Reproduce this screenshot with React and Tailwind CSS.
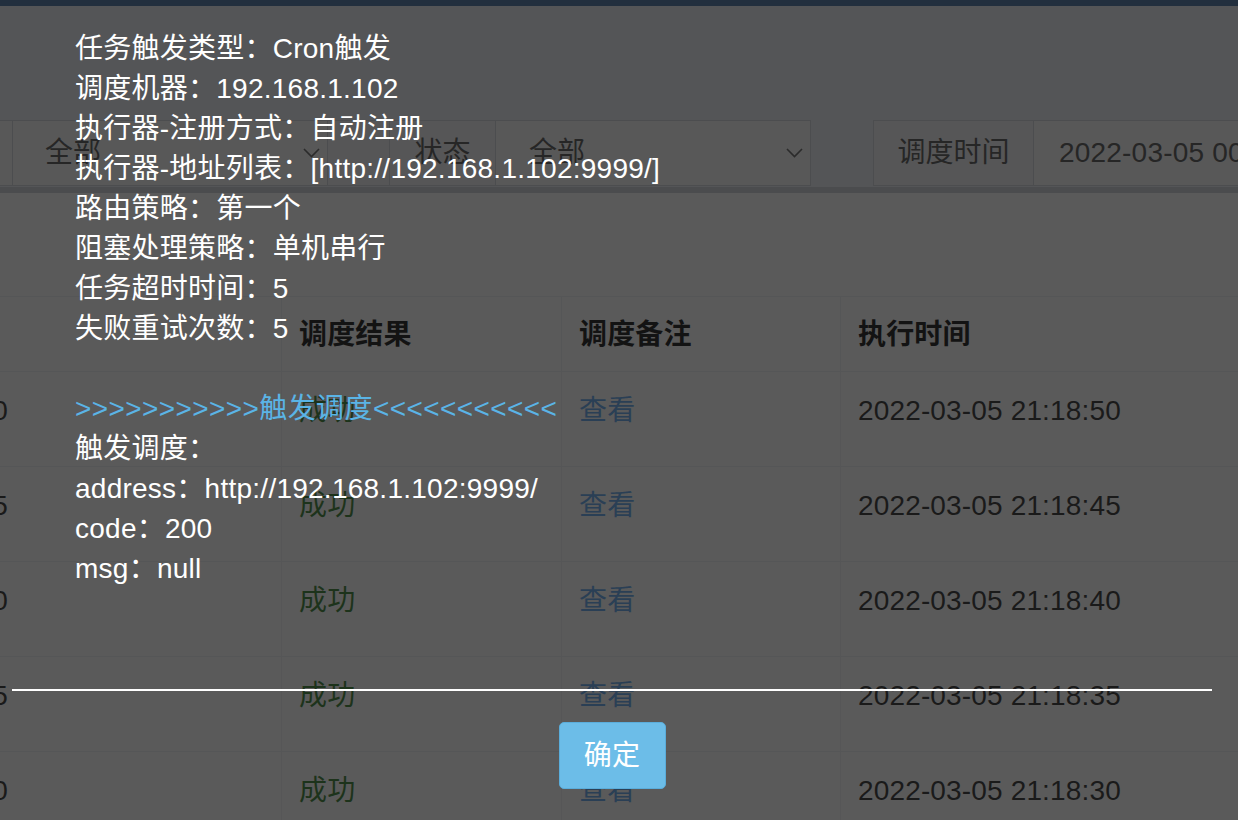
import React from 'react'

const font = { fontFamily: '"Liberation Sans", "Noto Sans CJK SC", sans-serif' }

function Chevron() {
  return (
    <svg width="17" height="10" viewBox="0 0 17 10" className="shrink-0">
      <polyline points="1,1 8.5,8.5 16,1" fill="none" stroke="#2b2b2b" strokeWidth="1.6" />
    </svg>
  )
}

const rows = [
  { time: '2022-03-05 21:18:50', trigger: '2022-03-05 21:18:50' },
  { time: '2022-03-05 21:18:45', trigger: '2022-03-05 21:18:45' },
  { time: '2022-03-05 21:18:40', trigger: '2022-03-05 21:18:40' },
  { time: '2022-03-05 21:18:35', trigger: '2022-03-05 21:18:35' },
  { time: '2022-03-05 21:18:30', trigger: '2022-03-05 21:18:30' }
]

const infoLines = [
  '任务触发类型：Cron触发',
  '调度机器：192.168.1.102',
  '执行器-注册方式：自动注册',
  '执行器-地址列表：[http://192.168.1.102:9999/]',
  '路由策略：第一个',
  '阻塞处理策略：单机串行',
  '任务超时时间：5',
  '失败重试次数：5'
]

const resultLines = [
  '触发调度：',
  'address：http://192.168.1.102:9999/',
  'code：200',
  'msg：null'
]

function LogPage() {
  return (
    <div className="flex flex-col">
      <div className="h-[6px] bg-[#222f3e]" />

      {/* filter bar */}
      <div className="mt-[114px] flex h-[66px] text-[28px] text-[#262626]">
        <div className="w-[13px] shrink-0 border-y border-r border-[#4c4d4f] bg-[#585858]" />
        <div className="flex w-[315px] shrink-0 items-center justify-between border-y border-r border-[#4c4d4f] bg-[#585858] pl-[32px] pr-[7px]">
          <span>全部</span>
          <Chevron />
        </div>
        <div className="w-[62px] shrink-0 border-y border-r border-[#4c4d4f] bg-[#565657]" />
        <div className="flex w-[106px] shrink-0 items-center justify-center border-y border-r border-[#4c4d4f] bg-[#565657]">
          状态
        </div>
        <div className="flex w-[315px] shrink-0 items-center justify-between border-y border-r border-[#4c4d4f] bg-[#585858] pl-[33px] pr-[7px]">
          <span>全部</span>
          <Chevron />
        </div>
        <div className="w-[62px] shrink-0" />
        <div className="flex w-[161px] shrink-0 items-center justify-center border border-[#4c4d4f] bg-[#565657]">
          调度时间
        </div>
        <div className="flex flex-1 items-center border-y border-[#4c4d4f] bg-[#585858] pl-[25px] whitespace-nowrap overflow-hidden tracking-[0.2px]">
          2022-03-05 00:00:00 - 2022-03-05 23:59:59
        </div>
      </div>

      <div className="mt-[1px] h-[6px] bg-[#4b4c4e]" />

      {/* log table */}
      <div className="bg-[#5a5a5a] pt-[103px] overflow-hidden">
        <div className="-ml-[272px] text-[28px] leading-[40px] text-[#1a1a1a] tracking-[0.15px]">
          <div className="flex h-[76px] border-y border-[#555657] font-bold text-[#131313]">
            <div className="w-[554px] shrink-0 border-r border-[#555657] pl-[17px] pt-[18px]">触发时间</div>
            <div className="w-[280px] shrink-0 border-r border-[#555657] pl-[17px] pt-[18px]">调度结果</div>
            <div className="w-[279px] shrink-0 border-r border-[#555657] pl-[17px] pt-[18px]">调度备注</div>
            <div className="flex-1 pl-[17px] pt-[18px]">执行时间</div>
          </div>
          {rows.map((row) => (
            <div key={row.time} className="flex h-[95px] border-b border-[#555657]">
              <div className="w-[554px] shrink-0 border-r border-[#565657] pl-[17px] pt-[19px] whitespace-nowrap">
                {row.trigger}
              </div>
              <div className="w-[280px] shrink-0 border-r border-[#565657] pl-[17px] pt-[19px] text-[#1d331b]">成功</div>
              <div className="w-[279px] shrink-0 border-r border-[#565657] pl-[17px] pt-[19px] text-[#2a3f55]">查看</div>
              <div className="flex-1 pl-[17px] pt-[19px] whitespace-nowrap">{row.time}</div>
            </div>
          ))}
        </div>
      </div>
    </div>
  )
}

function TriggerMsgDialog() {
  return (
    <div className="absolute left-[12px] top-0 flex w-[1200px] flex-col text-[28px] leading-[40px] text-white tracking-[0.25px]">
      <div className="h-[689px] pl-[63px] pt-[29px]">
        {infoLines.map((line) => (
          <p key={line} className="whitespace-nowrap">{line}</p>
        ))}
        <p className="h-[40px]" />
        <p className="whitespace-nowrap text-[#5ab4e6] tracking-[0.4px]">
          {'>>>>>>>>>>>'}触发调度{'<<<<<<<<<<<'}
        </p>
        {resultLines.map((line) => (
          <p key={line} className="whitespace-nowrap">{line}</p>
        ))}
      </div>
      <div className="h-[2px] bg-white" />
      <div className="flex justify-center pt-[31px]">
        <button
          type="button"
          className="flex h-[67px] w-[107px] items-center justify-center rounded-[5px] border border-[#5aaddb] bg-[#6cbde8] text-[28px] text-white"
        >
          确定
        </button>
      </div>
    </div>
  )
}

export default function App() {
  return (
    <div className="relative h-[820px] w-[1238px] overflow-hidden bg-[#545557]" style={font}>
      <LogPage />
      <TriggerMsgDialog />
    </div>
  )
}
